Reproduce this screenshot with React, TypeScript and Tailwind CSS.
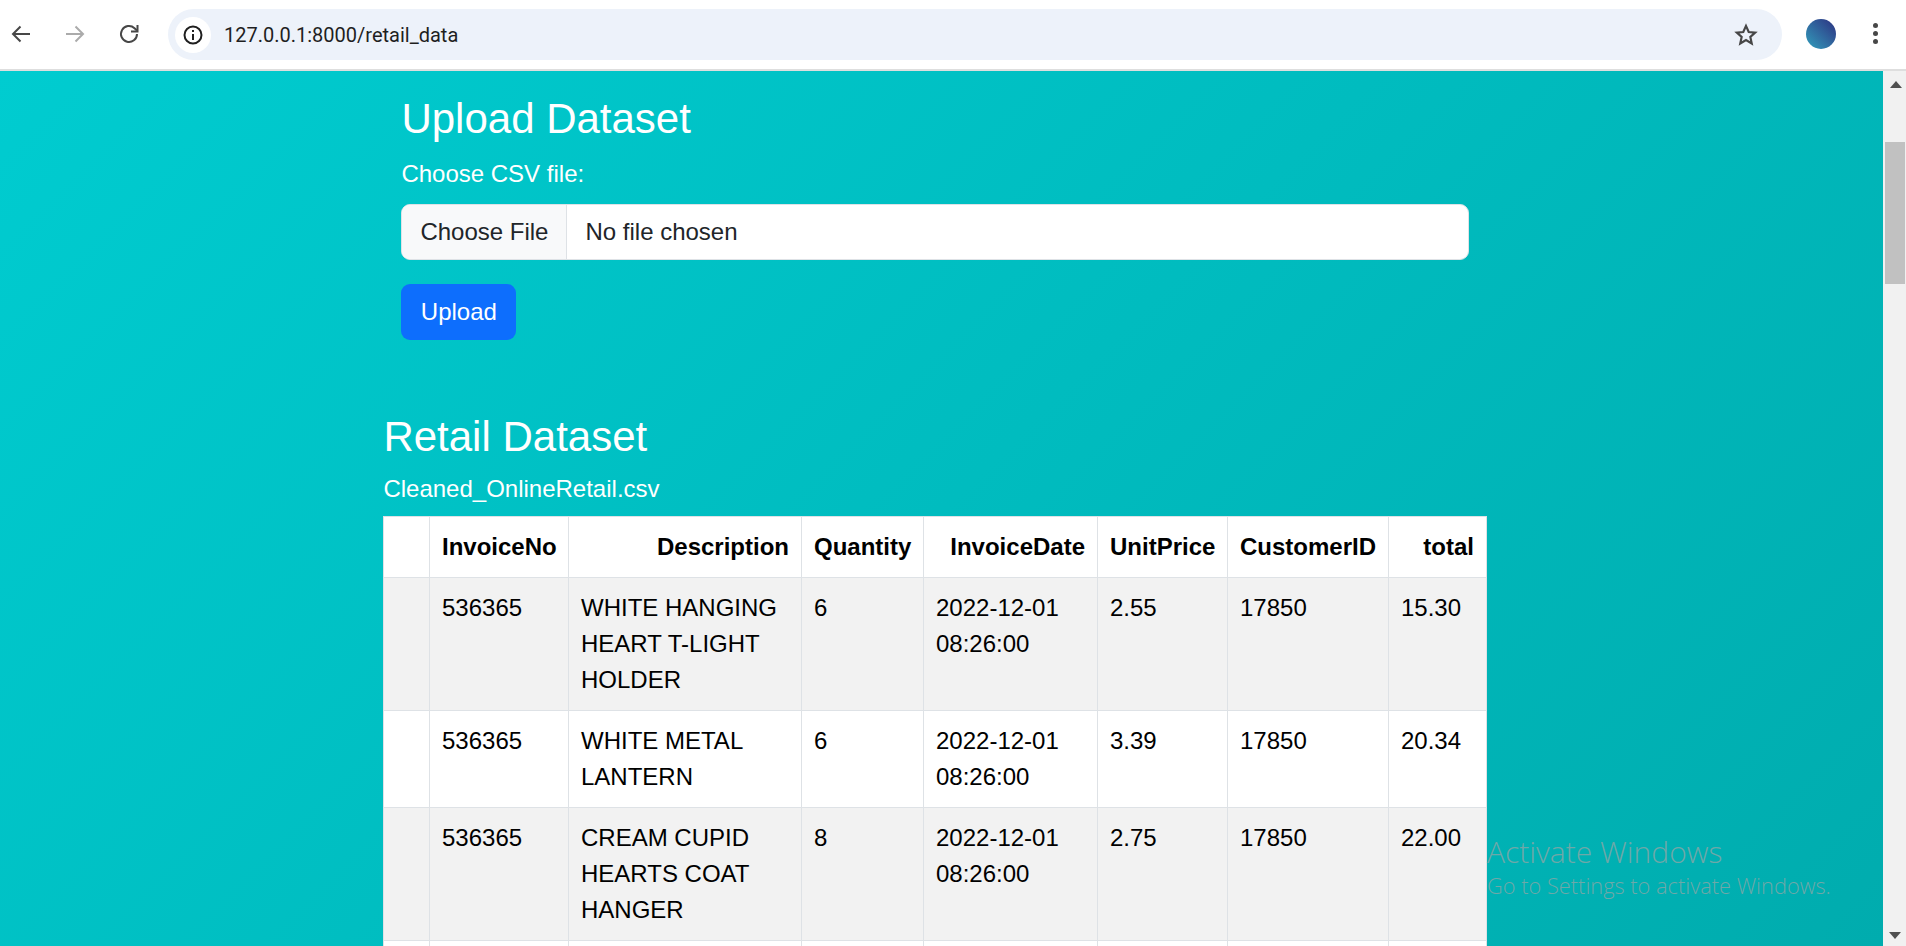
const font = { fontFamily: '"Liberation Sans", Arial, sans-serif' }

const rows = [
  { no: '536365', desc: 'WHITE HANGING HEART T-LIGHT HOLDER', qty: '6', price: '2.55', total: '15.30' },
  { no: '536365', desc: 'WHITE METAL LANTERN', qty: '6', price: '3.39', total: '20.34' },
  { no: '536365', desc: 'CREAM CUPID HEARTS COAT HANGER', qty: '8', price: '2.75', total: '22.00' },
]

function Toolbar() {
  return (
    <div className="flex h-[71px] shrink-0 items-start border-b-2 border-[#dedede] bg-white">
      <div className="flex h-[69px] w-[168px] shrink-0 items-center pb-[1px]">
        <svg width="24" height="24" viewBox="0 0 24 24" className="ml-[9px]" fill="none" stroke="#474747" strokeWidth="2">
          <path d="M21 12H4M11.5 4.5 4 12l7.5 7.5" />
        </svg>
        <svg width="24" height="24" viewBox="0 0 24 24" className="ml-[30px]" fill="none" stroke="#ababab" strokeWidth="2">
          <path d="M3 12h17M12.5 4.5 20 12l-7.5 7.5" />
        </svg>
        <svg width="24" height="24" viewBox="0 0 24 24" className="ml-[30px]" fill="none" stroke="#474747" strokeWidth="2">
          <path d="M20 12a8 8 0 1 1-2.5-5.8L20 8.5" />
          <path d="M20.5 3v6.5H14" />
        </svg>
      </div>
      <div className="mt-[9px] flex h-[51px] w-[1614px] items-center rounded-full bg-[#edf2fa]">
        <div className="ml-[7px] flex h-[36px] w-[36px] items-center justify-center rounded-full bg-white">
          <svg width="22" height="22" viewBox="0 0 22 22" fill="none" stroke="#1f1f1f" strokeWidth="2">
            <circle cx="11" cy="11" r="8.5" />
            <path d="M11 10v6M11 6v2" />
          </svg>
        </div>
        <span className="ml-[13px] text-[20px] text-[#1f1f1f]" style={{ fontFamily: 'Roboto, sans-serif' }}>
          127.0.0.1:8000/retail_data
        </span>
        <svg width="26" height="26" viewBox="0 0 24 24" className="ml-auto mr-[23px]" fill="none" stroke="#474747" strokeWidth="2">
          <path d="m12 3.6 2.5 5.6 6 .6-4.5 4 1.3 6-5.3-3.1-5.3 3.1 1.3-6-4.5-4 6-.6z" />
        </svg>
      </div>
      <div className="mt-[19px] ml-[24px] h-[30px] w-[30px] rounded-full bg-gradient-to-tr from-[#2f9fbc] to-[#2b2f80]" />
      <div className="mt-[23px] ml-[37px] flex flex-col gap-[3px]">
        <div className="h-[5px] w-[5px] rounded-full bg-[#474747]" />
        <div className="h-[5px] w-[5px] rounded-full bg-[#474747]" />
        <div className="h-[5px] w-[5px] rounded-full bg-[#474747]" />
      </div>
    </div>
  )
}

function Scrollbar() {
  return (
    <div className="flex w-[23px] shrink-0 flex-col items-center bg-[#f1f1f1]">
      <svg width="12" height="7" viewBox="0 0 12 7" className="mt-[10px] ml-[2px]">
        <path d="M6 0 12 7H0z" fill="#505050" />
      </svg>
      <div className="mt-[54px] ml-[1px] h-[142px] w-[20px] bg-[#c1c1c1]" />
      <svg width="12" height="7" viewBox="0 0 12 7" className="mt-auto mb-[7px]">
        <path d="M0 0h12L6 7z" fill="#505050" />
      </svg>
    </div>
  )
}

export default function App() {
  const th = 'border border-[#dee2e6] p-[12px] text-right font-bold align-top'
  const td = 'border border-[#dee2e6] p-[12px] text-left align-top'

  return (
    <div className="flex h-[946px] flex-col overflow-hidden text-[24px] leading-[36px]" style={font}>
      <Toolbar />
      <div className="relative flex min-h-0 flex-1">
        <main className="min-w-0 flex-1 overflow-hidden bg-[linear-gradient(135deg,#00ccd0,#00acae)]">
          <div className="ml-[383.4px] w-[1104px]">
            <section className="px-[18px] pt-[23px]">
              <h2 className="mb-[12px] text-[42px] leading-[50px] text-white">Upload Dataset</h2>
              <label className="mb-[12px] block text-white">Choose CSV file:</label>
              <div className="flex h-[56px] w-[1068px] overflow-hidden rounded-[9px] border border-[#dee2e6] bg-white text-[#212529]">
                <div className="flex items-center border-r border-[#dee2e6] bg-[#f8f9fa] px-[18px]">Choose File</div>
                <div className="flex items-center pl-[18px]">No file chosen</div>
              </div>
              <button className="mt-[24px] h-[56px] w-[115px] rounded-[9px] bg-[#0d6efd] text-white">Upload</button>
            </section>
            <section className="mt-[72px]">
              <h3 className="mb-[9px] text-[42px] leading-[50px] text-white">Retail Dataset</h3>
              <p className="mb-[9px] text-white">Cleaned_OnlineRetail.csv</p>
              <table className="-ml-[0.4px] w-[1103px] table-fixed border-collapse bg-white text-black">
                <colgroup>
                  <col className="w-[46px]" />
                  <col className="w-[139px]" />
                  <col className="w-[233px]" />
                  <col className="w-[122px]" />
                  <col className="w-[174px]" />
                  <col className="w-[130px]" />
                  <col className="w-[161px]" />
                  <col className="w-[98px]" />
                </colgroup>
                <thead>
                  <tr>
                    <th className={th}></th>
                    <th className={th}>InvoiceNo</th>
                    <th className={th}>Description</th>
                    <th className={th}>Quantity</th>
                    <th className={th}>InvoiceDate</th>
                    <th className={th}>UnitPrice</th>
                    <th className={th}>CustomerID</th>
                    <th className={th}>total</th>
                  </tr>
                </thead>
                <tbody>
                  {rows.map((row, i) => (
                    <tr key={i} className="odd:bg-[#f2f2f2]">
                      <td className={td}></td>
                      <td className={td}>{row.no}</td>
                      <td className={td}>{row.desc}</td>
                      <td className={td}>{row.qty}</td>
                      <td className={td}>2022-12-01 08:26:00</td>
                      <td className={td}>{row.price}</td>
                      <td className={td}>17850</td>
                      <td className={td}>{row.total}</td>
                    </tr>
                  ))}
                  <tr className="h-[61px]">
                    <td className={td}></td>
                    <td className={td}></td>
                    <td className={td}></td>
                    <td className={td}></td>
                    <td className={td}></td>
                    <td className={td}></td>
                    <td className={td}></td>
                    <td className={td}></td>
                  </tr>
                </tbody>
              </table>
            </section>
          </div>
        </main>
        <Scrollbar />
        {/* windows watermark */}
        <div className="pointer-events-none absolute left-[1487px] top-[762px] text-[#6ea8a8]" style={{ fontFamily: '"Open Sans", sans-serif' }}>
          <div className="text-[30px] leading-[38px] font-light">Activate Windows</div>
          <div className="text-[21.8px] leading-[30px] font-light">Go to Settings to activate Windows.</div>
        </div>
      </div>
    </div>
  )
}
